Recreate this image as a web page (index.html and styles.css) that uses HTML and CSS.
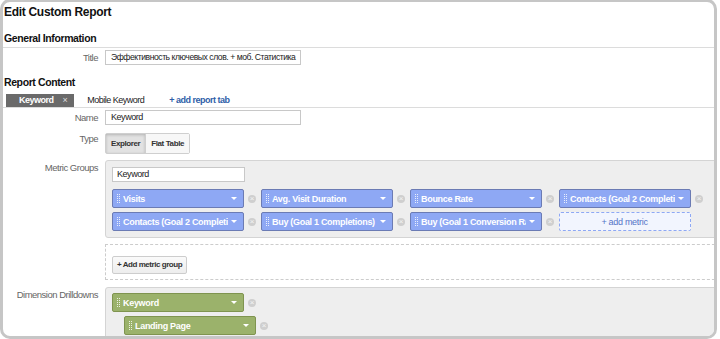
FILE: index.html
```html
<!DOCTYPE html>
<html lang="en">
<head>
    <meta charset="UTF-8">
    <title>Edit Custom Report</title>
    <link rel="stylesheet" href="styles.css">
</head>
<body>
<div class="frame">
    <h1 class="page-title">Edit Custom Report</h1>

    <h2 class="section-title line">General Information</h2>
    <div class="row row-title">
        <label>Title</label>
        <div class="field title-field">Эффективность ключевых слов. + моб. Статистика</div>
    </div>

    <h2 class="section-title">Report Content</h2>
    <div class="tabs">
        <span class="tab active">Keyword <span class="tab-x">×</span></span>
        <span class="tab">Mobile Keyword</span>
        <span class="tab add">+ add report tab</span>
    </div>

    <div class="row row-name">
        <label>Name</label>
        <div class="field">Keyword</div>
    </div>

    <div class="row row-type">
        <label>Type</label>
        <div class="toggle">
            <span class="toggle-btn on">Explorer</span>
            <span class="toggle-btn">Flat Table</span>
        </div>
    </div>

    <!-- metric groups -->
    <div class="row row-metrics">
        <label>Metric Groups</label>
        <div class="panel metrics">
            <div class="field small">Keyword</div>
            <div class="chips">
                <div class="chip-wrap"><span class="chip blue"><i class="grip"></i><span class="chip-text">Visits</span><i class="caret"></i></span><span class="remove">×</span></div>
                <div class="chip-wrap"><span class="chip blue"><i class="grip"></i><span class="chip-text">Avg. Visit Duration</span><i class="caret"></i></span><span class="remove">×</span></div>
                <div class="chip-wrap"><span class="chip blue"><i class="grip"></i><span class="chip-text">Bounce Rate</span><i class="caret"></i></span><span class="remove">×</span></div>
                <div class="chip-wrap"><span class="chip blue"><i class="grip"></i><span class="chip-text">Contacts (Goal 2 Completions)</span><i class="caret"></i></span><span class="remove">×</span></div>
                <div class="chip-wrap"><span class="chip blue"><i class="grip"></i><span class="chip-text">Contacts (Goal 2 Completions)</span><i class="caret"></i></span><span class="remove">×</span></div>
                <div class="chip-wrap"><span class="chip blue"><i class="grip"></i><span class="chip-text">Buy (Goal 1 Completions)</span><i class="caret"></i></span><span class="remove">×</span></div>
                <div class="chip-wrap"><span class="chip blue"><i class="grip"></i><span class="chip-text">Buy (Goal 1 Conversion Rate)</span><i class="caret"></i></span><span class="remove">×</span></div>
                <div class="chip-wrap"><span class="chip add-metric">+ add metric</span></div>
            </div>
        </div>
    </div>

    <div class="row row-group">
        <label></label>
        <div class="dashed-box">
            <span class="btn">+ Add metric group</span>
        </div>
    </div>

    <!-- dimensions -->
    <div class="row row-dims">
        <label>Dimension Drilldowns</label>
        <div class="panel dims">
            <div class="chip-wrap"><span class="chip green"><i class="grip"></i><span class="chip-text">Keyword</span><i class="caret"></i></span><span class="remove">×</span></div>
            <div class="chip-wrap indent"><span class="chip green"><i class="grip"></i><span class="chip-text">Landing Page</span><i class="caret"></i></span><span class="remove">×</span></div>
        </div>
    </div>
</div>
</body>
</html>
```

FILE: styles.css
```css
body {
    margin: 0;
    font-family: "Liberation Sans", Arial, sans-serif;
    background: #fff;
}

.frame {
    box-sizing: border-box;
    width: 717px;
    height: 340px;
    margin-top: -1px;
    border: 3px solid #c6c6c6;
    border-radius: 10px;
    overflow: hidden;
    background: #fff;
}

.page-title {
    margin: 3px 0 0 1px;
    font-size: 12px;
    line-height: 15px;
    letter-spacing: -0.3px;
    color: #111;
}

.section-title {
    margin: 11px 0 0 0;
    padding-left: 1px;
    font-size: 10.5px;
    line-height: 13px;
    letter-spacing: -0.4px;
    color: #111;
}

.section-title.line {
    margin-top: 12px;
    padding-bottom: 2px;
    border-bottom: 1px solid #dcdcdc;
}

.row {
    display: flex;
    align-items: flex-start;
}

.row label {
    width: 95px;
    flex: none;
    margin-right: 7px;
    text-align: right;
    font-size: 9.5px;
    letter-spacing: -0.5px;
    color: #666;
}

.field {
    box-sizing: border-box;
    width: 196px;
    height: 15px;
    padding: 0 5px;
    border: 1px solid #c8c8c8;
    font-size: 9px;
    line-height: 13px;
    letter-spacing: -0.45px;
    color: #222;
    background: #fff;
    white-space: nowrap;
    overflow: hidden;
}

.field.title-field {
    font-size: 8.6px;
    letter-spacing: -0.45px;
}

.field.small {
    width: 133px;
    padding: 0 4px;
}

.row-title {
    margin-top: 2px;
}

.row-title label,
.row-name label {
    line-height: 15px;
}

/* tabs */
.tabs {
    display: flex;
    align-items: stretch;
    height: 13px;
    margin-top: 5px;
    padding-left: 3px;
    border-bottom: 1px solid #dcdcdc;
    white-space: nowrap;
}

.tab {
    font-size: 9px;
    line-height: 13px;
    letter-spacing: -0.5px;
    color: #222;
    padding: 0 13px;
}

.tab.active {
    background: #6a6a6a;
    color: #fff;
    font-weight: bold;
    padding: 0 7px 0 13px;
}

.tab-x {
    margin-left: 7px;
    font-weight: normal;
    color: #ddd;
}

.tab.add {
    color: #2f5ea8;
    font-weight: bold;
    padding-left: 12px;
}

.row-name {
    margin-top: 2px;
}

/* type toggle */
.row-type {
    margin-top: 8px;
}

.row-type label {
    line-height: 12px;
}

.toggle {
    display: flex;
    border: 1px solid #cfcfcf;
    border-radius: 2px;
    height: 19px;
}

.toggle-btn {
    font-size: 8px;
    font-weight: bold;
    letter-spacing: -0.4px;
    line-height: 19px;
    padding: 0 5px;
    color: #333;
    background: #f7f7f7;
}

.toggle-btn.on {
    background: #e2e2e2;
    box-shadow: inset 0 1px 3px rgba(0, 0, 0, 0.2);
    border-right: 1px solid #cfcfcf;
}

/* panels */
.panel {
    box-sizing: border-box;
    width: 630px;
    flex: none;
    padding: 6px 0 6px 6px;
    background: #eeeeee;
    border: 1px solid #d4d4d4;
    border-radius: 3px;
}

.row-metrics {
    margin-top: 6px;
}

.row-metrics label,
.row-dims label {
    margin-top: 2px;
}

.chips {
    display: flex;
    flex-wrap: wrap;
    width: 600px;
    row-gap: 4px;
    margin-top: 7px;
}

.chip-wrap {
    display: flex;
    align-items: center;
    width: 149px;
}

.chip {
    box-sizing: border-box;
    display: flex;
    align-items: center;
    width: 132px;
    height: 19px;
    padding: 0 4px 0 3px;
    border-radius: 2px;
    font-size: 9px;
    font-weight: bold;
    letter-spacing: -0.3px;
    color: #fff;
    white-space: nowrap;
    overflow: hidden;
}

.chip.blue {
    background: #8ea8f4;
    border: 1px solid #6b7bb4;
}

.chip.green {
    background: #9bb26b;
    border: 1px solid #7f944f;
}

.chip-text {
    overflow: hidden;
    flex: 1;
    min-width: 0;
}

.grip {
    flex: none;
    width: 4px;
    height: 10px;
    margin-right: 3px;
    background-image: conic-gradient(rgba(255, 255, 255, 0.8) 25%, transparent 0);
    background-size: 2px 2px;
}

.caret {
    flex: none;
    width: 0;
    height: 0;
    margin: 0 2px 0 3px;
    border-left: 3px solid transparent;
    border-right: 3px solid transparent;
    border-top: 3px solid #fff;
}

.remove {
    flex: none;
    width: 8px;
    height: 8px;
    margin-left: 4px;
    border-radius: 50%;
    background: #cfcfcf;
    color: #f4f4f4;
    font-size: 8px;
    line-height: 8px;
    text-align: center;
}

.chip.add-metric {
    justify-content: center;
    background: #f2f5fe;
    border: 1px dashed #8ea8f4;
    color: #5574c8;
    font-size: 9px;
    font-weight: normal;
}

/* add metric group */
.row-group {
    margin-top: 6px;
}

.dashed-box {
    box-sizing: border-box;
    width: 630px;
    flex: none;
    height: 36px;
    padding: 8px 6px;
    border: 1px dashed #cccccc;
    border-right: none;
}

.btn {
    display: inline-block;
    height: 16px;
    padding: 0 4px;
    border: 1px solid #cdcdcd;
    border-radius: 2px;
    background: linear-gradient(#fafafa, #ededed);
    font-size: 8px;
    font-weight: bold;
    letter-spacing: -0.45px;
    line-height: 16px;
    color: #333;
}

/* dimensions */
.row-dims {
    margin-top: 7px;
}

.dims {
    height: 80px;
    padding-top: 5px;
}

.dims .chip-wrap + .chip-wrap {
    margin-top: 4px;
}

.chip-wrap.indent {
    padding-left: 12px;
}
```
